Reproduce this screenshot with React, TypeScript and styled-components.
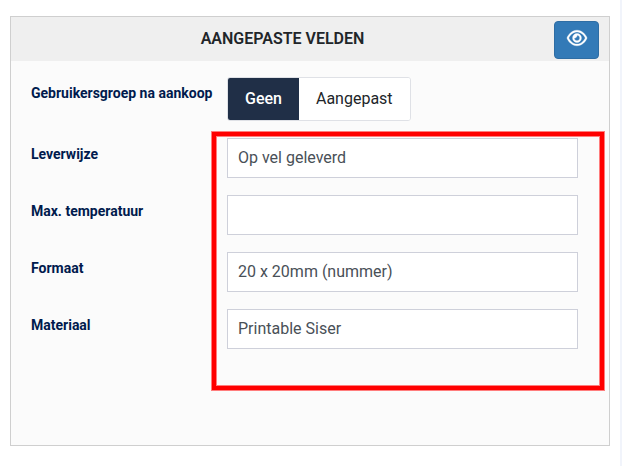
import React, { useState } from "react";
import styled, { createGlobalStyle } from "styled-components";
import { FaRegEye } from "react-icons/fa6";

const GlobalStyle = createGlobalStyle`
  *, *::before, *::after { box-sizing: border-box; }
  body {
    margin: 0;
    background: #ffffff;
    font-family: Roboto, "Liberation Sans", sans-serif;
    font-size: 16px;
    color: #212529;
  }
  button, input { font: inherit; }
`;

const Page = styled.div`
  display: flex;
  min-height: 100vh;
  padding: 16px 10px 20px;
  border-right: 2px solid #f1f4fb;
`;

const Panel = styled.section`
  flex: 1;
  min-width: 0;
  border: 1px solid #cfcfcf;
  background: #fbfbfb;
`;

const PanelHeader = styled.header`
  display: flex;
  align-items: center;
  height: 44px;
  padding-right: 10px;
  background: #efefef;
`;

const Title = styled.h2`
  flex: 1;
  margin: 0;
  font-size: 16px;
  line-height: 24px;
  font-weight: 600;
  text-align: center;
  text-transform: uppercase;
`;

const ViewButton = styled.button`
  display: flex;
  align-items: center;
  justify-content: center;
  width: 45px;
  height: 38px;
  margin-top: 2px;
  padding: 0 0 4px;
  border: 1px solid #2e6da4;
  border-radius: 4px;
  background: #337ab7;
  color: #ffffff;
  font-size: 20px;
  cursor: pointer;
`;

const EyeIcon = styled(FaRegEye)`
  overflow: visible;
  stroke: currentColor;
  stroke-width: 10px;
`;

const Form = styled.form`
  display: flex;
  flex-direction: column;
  gap: 17px;
  padding: 16px 31px 16px 20px;
`;

const Row = styled.div`
  display: grid;
  grid-template-columns: 196px 1fr;
  align-items: start;
`;

const labelText = `
  padding-top: 6px;
  font-size: 14px;
  line-height: 20px;
  font-weight: 700;
  color: #001a4d;
  white-space: nowrap;
`;

const Label = styled.label`
  ${labelText}
`;

const GroupLabel = styled.span`
  ${labelText}
`;

const Toggle = styled.div`
  display: flex;
  justify-self: start;
  height: 44px;
  border: 1px solid #dfe1e6;
  border-radius: 3px;
  background: #ffffff;
  overflow: hidden;
`;

const ToggleButton = styled.button<{ $active: boolean }>`
  padding: 0 17px 2px;
  border: 0;
  background: ${({ $active }) => ($active ? "#202f47" : "#ffffff")};
  color: ${({ $active }) => ($active ? "#ffffff" : "#212529")};
  font-weight: ${({ $active }) => ($active ? 500 : 400)};
  cursor: pointer;
`;

const Fields = styled.div`
  position: relative;
  display: flex;
  flex-direction: column;
  gap: 17px;
`;

const TextInput = styled.input`
  width: 100%;
  height: 40px;
  padding: 0 10px 2px;
  border: 1px solid #ced0da;
  border-radius: 0;
  background: #ffffff;
  color: #495057;
`;

const Highlight = styled.div`
  position: absolute;
  top: -7px;
  right: -27px;
  bottom: -42px;
  left: 180px;
  border: 1px solid #ff7d7d;
  pointer-events: none;

  &::before {
    content: "";
    position: absolute;
    inset: 0;
    border: 4px solid #ff0000;
  }

  &::after {
    content: "";
    position: absolute;
    inset: 4px;
    border: 1px solid #ff7d7d;
  }
`;

const groupOptions = ["Geen", "Aangepast"];

const fields = [
  { id: "leverwijze", label: "Leverwijze", value: "Op vel geleverd" },
  { id: "temperatuur", label: "Max. temperatuur", value: "" },
  { id: "formaat", label: "Formaat", value: "20 x 20mm (nummer)" },
  { id: "materiaal", label: "Materiaal", value: "Printable Siser" },
];

export default function App() {
  const [group, setGroup] = useState("Geen");

  return (
    <>
      <GlobalStyle />
      <Page>
        <Panel>
          <PanelHeader>
            <Title>Aangepaste velden</Title>
            <ViewButton type="button" aria-label="Weergeven">
              <EyeIcon />
            </ViewButton>
          </PanelHeader>
          <Form>
            <Row role="group" aria-labelledby="gebruikersgroep">
              <GroupLabel id="gebruikersgroep">Gebruikersgroep na aankoop</GroupLabel>
              <Toggle>
                {groupOptions.map((option) => (
                  <ToggleButton
                    key={option}
                    type="button"
                    $active={option === group}
                    aria-pressed={option === group}
                    onClick={() => setGroup(option)}
                  >
                    {option}
                  </ToggleButton>
                ))}
              </Toggle>
            </Row>
            <Fields>
              {fields.map(({ id, label, value }) => (
                <Row key={id}>
                  <Label htmlFor={id}>{label}</Label>
                  <TextInput id={id} type="text" defaultValue={value} />
                </Row>
              ))}
              <Highlight />
            </Fields>
          </Form>
        </Panel>
      </Page>
    </>
  );
}
